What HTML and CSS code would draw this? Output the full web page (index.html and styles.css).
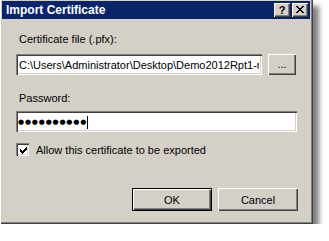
FILE: index.html
```html
<!DOCTYPE html>
<html>
<head>
<meta charset="utf-8">
<link rel="stylesheet" href="styles.css">
</head>
<body>
<div class="window">
  <div class="titlebar">
    <span class="title">Import Certificate</span>
    <div class="caps">
      <div class="cap cap-help">?</div>
      <div class="cap cap-close">
        <svg width="8" height="7" viewBox="0 0 8 7"><path d="M0 0h2v1h-2zM6 0h2v1h-2zM1 1h2v1h-2zM5 1h2v1h-2zM2 2h4v1h-4zM3 3h2v1h-2zM2 4h4v1h-4zM1 5h2v1h-2zM5 5h2v1h-2zM0 6h2v1h-2zM6 6h2v1h-2z" fill="#000"/></svg>
      </div>
    </div>
  </div>
  <div class="content">
    <div class="lbl lbl-file">Certificate file (.pfx):</div>
    <div class="file-row">
      <div class="field field-file"><span class="field-text">C:\Users\Administrator\Desktop\Demo2012Rpt1-n</span></div>
      <div class="btn btn-browse">...</div>
    </div>
    <div class="lbl lbl-pass">Password:</div>
    <div class="field field-pass"><span class="dots">●●●●●●●●●●</span><span class="caret"></span></div>
    <div class="check-row">
      <span class="checkbox">
        <svg width="9" height="9" viewBox="0 0 9 9"><path d="M1 3h1v3h-1zM2 4h1v3h-1zM3 5h1v3h-1zM4 4h1v3h-1zM5 3h1v3h-1zM6 2h1v3h-1zM7 1h1v3h-1z" fill="#000"/></svg>
      </span>
      <span class="check-label">Allow this certificate to be exported</span>
    </div>
    <div class="actions">
      <div class="btn btn-default"><span class="btn-inner">OK</span></div>
      <div class="btn btn-cancel">Cancel</div>
    </div>
  </div>
</div>
</body>
</html>
```

FILE: styles.css
```css
* { box-sizing: border-box; }
html, body { margin: 0; padding: 0; background: #ffffff; }
body {
  font-family: "Liberation Sans", Arial, sans-serif;
  font-size: 11px;
  color: #000;
}
.window {
  width: 313px;
  height: 224px;
  background: #d4d0c8;
  padding: 1px 3px 3px 2px;
  box-shadow:
    inset 1px 0 0 #ffffff,
    inset -1px -1px 0 #404040,
    inset -2px -2px 0 #808080,
    6px 6px 5px rgba(0, 0, 0, 0.5);
  display: flex;
  flex-direction: column;
}
.titlebar {
  height: 18px;
  background: #0a246a;
  display: flex;
  align-items: center;
  justify-content: space-between;
  padding: 0 2px 0 4px;
}
.title {
  color: #ffffff;
  font-weight: bold;
  font-size: 12px;
  line-height: 14px;
}
.caps { display: flex; gap: 2px; }
.cap {
  width: 16px;
  height: 14px;
  background: #d4d0c8;
  box-shadow:
    inset 1px 1px 0 #ffffff,
    inset -1px -1px 0 #404040,
    inset -2px -2px 0 #808080;
  display: flex;
  align-items: center;
  justify-content: center;
  font-weight: bold;
  font-size: 11px;
  line-height: 12px;
  padding-bottom: 1px;
}
.cap-close svg { display: block; margin-right: 1px; }
.content {
  padding: 0 14px 0 14px;
  display: flex;
  flex-direction: column;
}
.lbl {
  line-height: 13px;
  padding-left: 3px;
}
.lbl-file { margin-top: 14px; }
.file-row {
  display: flex;
  gap: 6px;
  margin-top: 8px;
}
.field {
  height: 21px;
  background: #ffffff;
  box-shadow:
    inset 1px 1px 0 #808080,
    inset 2px 2px 0 #404040,
    inset -1px -1px 0 #ffffff,
    inset -2px -2px 0 #d4d0c8;
  display: flex;
  align-items: center;
  overflow: hidden;
  white-space: nowrap;
  padding: 1px 3px 0 3px;
}
.field-file { width: 247px; }
.field-text { display: block; overflow: hidden; min-width: 0; text-overflow: clip; }
.btn {
  background: #d4d0c8;
  box-shadow:
    inset 1px 1px 0 #ffffff,
    inset -1px -1px 0 #404040,
    inset -2px -2px 0 #808080;
  display: flex;
  align-items: center;
  justify-content: center;
}
.btn-browse {
  width: 28px;
  height: 21px;
  padding-bottom: 1px;
}
.lbl-pass { margin-top: 17px; }
.field-pass {
  margin-top: 6px;
  width: 281px;
  padding-left: 2px;
}
.dots {
  font-family: "DejaVu Sans", sans-serif;
  font-size: 7px;
  letter-spacing: 0.8px;
  line-height: 10px;
}
.caret {
  display: inline-block;
  width: 1px;
  height: 13px;
  background: #000;
  margin-left: 0;
}
.check-row {
  margin-top: 10px;
  display: flex;
  align-items: center;
  gap: 7px;
}
.checkbox {
  width: 13px;
  height: 13px;
  background: #ffffff;
  box-shadow:
    inset 1px 1px 0 #808080,
    inset 2px 2px 0 #404040,
    inset -1px -1px 0 #ffffff,
    inset -2px -2px 0 #d4d0c8;
  display: flex;
  align-items: center;
  justify-content: center;
  padding: 1px 0 0 1px;
}
.checkbox svg { display: block; }
.check-label { line-height: 13px; padding-top: 2px; }
.actions {
  margin-top: 31px;
  display: flex;
  justify-content: flex-end;
  gap: 6px;
  margin-right: -2px;
}
.btn-default, .btn-cancel {
  width: 80px;
  height: 23px;
}
.btn-default {
  box-shadow:
    inset 0 0 0 1px #000000,
    inset 2px 2px 0 #ffffff,
    inset -2px -2px 0 #404040,
    inset -3px -3px 0 #808080;
}
```
